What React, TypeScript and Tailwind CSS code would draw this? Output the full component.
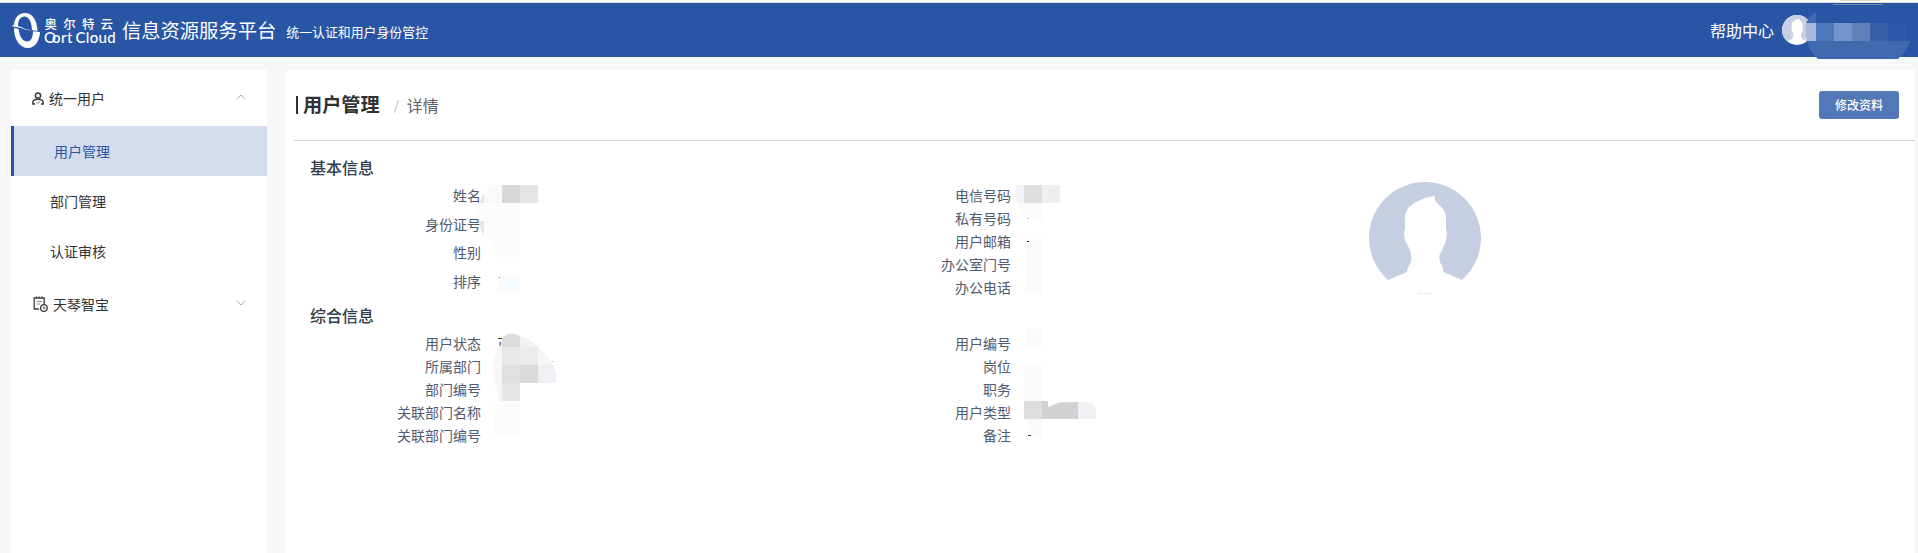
import type { ReactNode } from "react";

function Person({ className, back }: { className: string; back: string }) {
  return (
    <svg className={className} viewBox="0 0 112 112">
      <path d="M19 98A56 56 0 1 1 93 98L74.500 90Q73.500 84 72 82Q70 80 70.500 73Q75 64 76.500 60Q79 49 77 48L77 36Q77 28 69 22Q65 19 66 14Q52 15 40 25Q36 30 36 36V48Q34 49 36 58Q42 69 42 73Q43 79 41 82Q39 84 38 90Z" fill={back} />
      <path d="M49 111.500Q56 112.500 63 111.500" stroke={back} strokeWidth=".6" fill="none" />
    </svg>
  );
}

function Logo() {
  return (
    <svg className="block h-[40px] w-[111px]" viewBox="0 0 111 40" fill="#fff">
      <path d="M1 16L3 14.500C4 7 8 3 14 3C21.500 3 26 10 26.500 21L21 20C20.500 12 18 6.500 13.500 6.500C9.500 6.500 7 10 7 16L14 18.500L3 16.800Z" />
      <path d="M3 18C3 30 9 38 17 38C24 38 28.500 31 29 22L22 21.200C22 27 20 31.500 16.500 31.500C12 31.500 8.500 27 7.500 19Z" />
      <path d="M7 17L22 21L14 19.500Z" />
      <text x="33.500" y="18.500" fontSize="12.500" fontWeight="500" letterSpacing="6.200" fontFamily="Noto Sans CJK SC, sans-serif">奥尔特云</text>
      <text y="32.700" fontSize="15" fontWeight="500" fontFamily="Lato, sans-serif">
        <tspan x="33">O</tspan><tspan x="41">o</tspan><tspan x="50" letterSpacing=".5">rt</tspan><tspan x="64.500" letterSpacing=".3">Cloud</tspan>
      </text>
    </svg>
  );
}

function UserIcon() {
  return (
    <svg className="mt-[1px] ml-[1px] h-[13px] w-[12px]" viewBox="0 0 12 13" fill="none" stroke="#3c3c3c" strokeWidth="1.500">
      <circle cx="6" cy="3.500" r="2.600" />
      <path d="M3 12H.9V10.500Q.9 7.300 6 7.300Q11.100 7.300 11.100 10.500V12H9" />
      <path d="M4 10L5.700 11.500L8 9.500" stroke="#888" strokeWidth="1" />
    </svg>
  );
}

function RecordIcon() {
  return (
    <svg className="h-[16px] w-[15px]" viewBox="0 0 15 16" fill="none" stroke="#3c3c3c" strokeWidth="1.300">
      <path d="M6 13H1.200V2H11.200V8M3.500 .5V2.800M6.200 .5V2.800M8.900 .5V2.800" />
      <path d="M3.500 5.500H9M3.500 8H7" stroke="#888" strokeWidth="1" />
      <circle cx="10.900" cy="12" r="3.300" />
      <path d="M10.700 10.500V12.200H12.500" strokeWidth="1" />
    </svg>
  );
}

function Chevron({ up = false }: { up?: boolean }) {
  return (
    <svg className="mr-[21px] ml-auto h-[6px] w-[10px]" viewBox="0 0 10 6" fill="none" stroke="#a4a8b0">
      <path d={up ? "M.7 5.300L5 1L9.300 5.300" : "M.7 .7L5 5L9.300 .7"} />
    </svg>
  );
}

function Group({ icon, label, up, className }: { icon: ReactNode; label: string; up?: boolean; className: string }) {
  return (
    <div className={`flex h-14 items-center text-[14px] text-[#303133] ${className}`}>
      {icon}
      <span>{label}</span>
      <div className="-mt-[3px] ml-auto flex"><Chevron up={up} /></div>
    </div>
  );
}

function Labels({ items, tall = false }: { items: string[]; tall?: boolean }) {
  return (
    <div className="flex flex-col items-end text-[14px] text-[#515a6e]">
      {items.map((item) => (
        <div key={item} className={tall ? "flex h-[28.670px] items-start leading-[23px]" : "h-[23px] leading-[23px]"}>{item}</div>
      ))}
    </div>
  );
}

function HeaderMask() {
  return (
    <svg className="pointer-events-none absolute top-0 left-[1800px] h-[70px] w-[118px]" viewBox="1800 0 118 70">
      <path d="M1813 57H1902Q1893 65 1880 65H1838Q1822 64 1813 57Z" fill="#f9fafb" />
      <path d="M1806 23Q1810 15 1816 12V23Z" fill="#4069b0" />
      <path d="M1807 41H1910Q1907 52 1898 59H1818Q1809 51 1807 41Z" fill="#4069b0" />
      <g shapeRendering="crispEdges">
        <path d="M1806 23H1816V41H1807Q1805 32 1806 23" fill="#a9b9db" />
        <path d="M1816 23h18v18h-18z" fill="#4f76b8" />
        <path d="M1834 23h18v18h-18z" fill="#7396ca" />
        <path d="M1852 23h18v18h-18z" fill="#6280bb" />
        <path d="M1870 23h18v18h-18z" fill="#3762aa" />
        <path d="M1888 23h18v18h-18z" fill="#2c5aa9" />
        <path d="M1833 4h50v1h-50z" fill="#71849c" />
        <path d="M1840 0h40v1h-40z" fill="#d7d8da" />
      </g>
    </svg>
  );
}

function ValueMasks() {
  return (
    <svg className="pointer-events-none absolute top-[180px] left-[470px] h-[270px] w-[640px]" viewBox="470 180 640 270">
      <path d="M491 185H502V203H481Q484 191 491 185Z" fill="#f9f9f8" />
      <path d="M480 203Q481 197 484 192V203Z" fill="#e5e6ec" />
      <path d="M479 203H520V257H496V249Q479 235 478 213Z" fill="#fcfcfc" />
      <path d="M479 221H484V236Q480 230 479 221Z" fill="#e5e6ec" />
      <path d="M502 185h18v18h-18z" fill="#d8d8d8" />
      <path d="M520 185h18v18h-18z" fill="#e4e5e5" />
      <path d="M497 275h5v18h-5z" fill="#fcfaf8" />
      <path d="M502 275h18v18h-18z" fill="#f6fbff" />
      <path d="M499 277h1v1h-1z" fill="#9b6638" />

      <path d="M502 343V401H497L499 395Q493 383 493 371Q493 354 502 343Z" fill="#f5f6f5" />
      <path d="M502 347V338Q510 330 520 336V347Z" fill="#dcdcdc" />
      <path d="M520 337Q530 338 538 347H520Z" fill="#f0f2f1" />
      <path d="M502 347h18v18h-18z" fill="#e6e8e8" />
      <path d="M502 365h18v18h-18z" fill="#e0e0df" />
      <path d="M502 383h18v18h-18z" fill="#e6e6e6" />
      <path d="M520 347h18v18h-18z" fill="#ebebeb" />
      <path d="M520 365h18v18h-18z" fill="#d9d9d9" />
      <path d="M538 347Q548 355 553 365H538Z" fill="#f4f5f5" />
      <path d="M538 365H553L556 372V383H538Z" fill="#eef0f4" />
      <path d="M496 401H520V437H494V417Z" fill="#fcfcfc" />
      <path d="M552 361h1v1h-1z" fill="#88bfe0" />

      <path d="M1016 185H1024V203H1017Q1014 194 1016 185Z" fill="#f1f3f6" />
      <path d="M1024 185h18v18h-18z" fill="#dedede" />
      <path d="M1042 185h18v18h-18z" fill="#efefef" />
      <path d="M1017 203H1042V221H1036Q1022 215 1017 203Z" fill="#fbfbfb" />
      <path d="M1028 239H1042V293H1025V259Z" fill="#fafafa" />
      <path d="M1027 218h2v1h-2z" fill="#d8b28e" />
      <path d="M1027 241h2v1h-2z" fill="#222" />

      <path d="M1025 329h17v18h-17z" fill="#fafafa" />
      <path d="M1025 365H1042V401H1024V391Q1022 386 1024 381Z" fill="#fafafa" />
      <path d="M1024 401h18v18h-18z" fill="#dededd" />
      <path d="M1042 401H1048V407L1058 403Q1062 402 1078 402V419H1042Z" fill="#d1d1d1" />
      <path d="M1078 402Q1093 401 1096 408V419H1078Z" fill="#eff0f3" />
      <path d="M1026 419H1042V437H1032Z" fill="#fafafa" />
      <path d="M1028 435h3v1h-3z" fill="#333" />
    </svg>
  );
}

export default function App() {
  return (
    <div className="relative flex h-[553px] w-full flex-col overflow-hidden bg-[#f7f7f7] font-['Noto_Sans_CJK_SC',sans-serif]">
      <div className="h-[3px] shrink-0 border-b border-[#dadce0] bg-white" />
      <header className="flex h-[54px] shrink-0 items-center bg-[#2856a5] text-white">
        <div className="ml-[11px] w-[111px]"><Logo /></div>
        <h1 className="text-[19.300px]">信息资源服务平台</h1>
        <span className="mt-[3px] ml-[10px] text-[12.900px]">统一认证和用户身份管控</span>
        <span className="ml-auto text-[16px]">帮助中心</span>
        <div className="mr-[106px] ml-[8px] h-[30px] w-[30px] overflow-hidden rounded-full bg-white">
          <Person className="block h-[30px] w-[30px]" back="#c6cee2" />
        </div>
      </header>

      <div className="flex min-h-0 flex-1 pt-[13px]">
        <aside className="ml-[11px] w-[256px] shrink-0 bg-white">
          <Group className="gap-[5px] pl-[20px]" icon={<UserIcon />} label="统一用户" up />
          <nav className="text-[14px] text-[#303133]">
            <div className="flex h-[50px] items-center border-l-3 border-[#2856a5] bg-[#d4dced] pl-[40px] text-[#2856a5]">用户管理</div>
            <div className="flex h-[50px] items-center pl-[39px]">部门管理</div>
            <div className="flex h-[50px] items-center pl-[39px]">认证审核</div>
          </nav>
          <Group className="gap-[5px] pl-[22px]" icon={<RecordIcon />} label="天琴智宝" />
        </aside>

        <main className="mr-[3px] ml-[19px] flex-1 bg-white">
          <div className="ml-[8px] flex h-[71px] items-center border-b border-[#d5d5d5]">
            <div className="ml-[2px] h-[18px] w-[2px] bg-[#27313b]" />
            <h2 className="-mt-[2px] ml-[5px] text-[19.200px] font-bold text-[#303133]">用户管理</h2>
            <span className="ml-[14px] text-[13px] text-[#b2b6bf]">/</span>
            <span className="-mt-px ml-[8px] text-[16px] text-[#606266]">详情</span>
            <button className="mr-[16px] ml-auto h-[28px] w-[80px] rounded-[3px] bg-[#5378b7] pb-[1px] text-[12px] font-medium text-white">修改资料</button>
          </div>

          <section className="h-[148px] pt-[14px]">
            <h3 className="ml-[24px] h-[29px] text-[16px] leading-6 font-medium text-[#303d4e]">基本信息</h3>
            <div className="grid grid-cols-[195px_530px_486px]">
              <Labels tall items={["姓名", "身份证号", "性别", "排序"]} />
              <Labels items={["电信号码", "私有号码", "用户邮箱", "办公室门号", "办公电话"]} />
              <div className="-mt-[2px] flex pl-[358px]">
                <Person className="h-[112px] w-[112px] shrink-0" back="#c6cee2" />
              </div>
            </div>
          </section>
          <section className="pt-[14px]">
            <h3 className="ml-[24px] h-[29px] text-[16px] leading-6 font-medium text-[#303d4e]">综合信息</h3>
            <div className="grid grid-cols-[195px_530px]">
              <div className="relative">
                <Labels items={["用户状态", "所属部门", "部门编号", "关联部门名称", "关联部门编号"]} />
                <span className="absolute top-0 left-[211px] text-[14px] leading-[23px] text-[#303133]">正</span>
              </div>
              <Labels items={["用户编号", "岗位", "职务", "用户类型", "备注"]} />
            </div>
          </section>
        </main>
      </div>
      <HeaderMask />
      <ValueMasks />
    </div>
  );
}
